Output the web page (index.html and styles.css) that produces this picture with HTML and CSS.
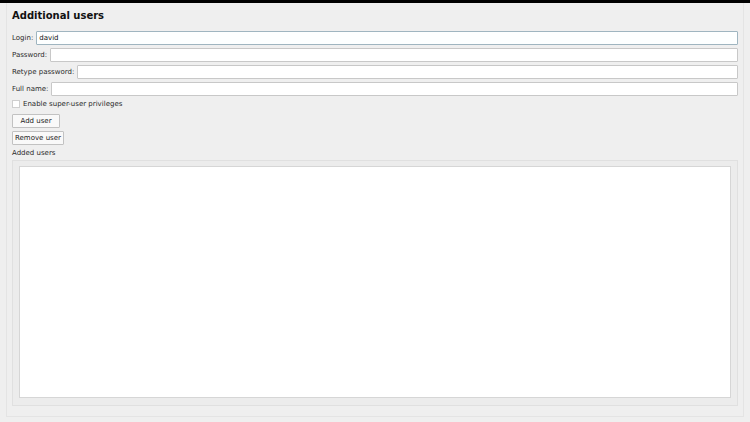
FILE: index.html
```html
<!DOCTYPE html>
<html>
<head>
<meta charset="utf-8">
<link rel="stylesheet" href="styles.css">
</head>
<body>
<div class="topbar"></div>
<div class="page">
  <h1 class="title">Additional users</h1>
  <div class="form">
    <div class="row"><label class="lbl">Login:</label><div class="input focus">david</div></div>
    <div class="row"><label class="lbl">Password:</label><div class="input"></div></div>
    <div class="row"><label class="lbl">Retype password:</label><div class="input"></div></div>
    <div class="row"><label class="lbl">Full name:</label><div class="input"></div></div>
  </div>
  <div class="check"><span class="box"></span><span class="lbl">Enable super-user privileges</span></div>
  <div class="buttons">
    <span class="btn add">Add user</span>
    <span class="btn">Remove user</span>
  </div>
  <div class="lbl added">Added users</div>
  <div class="frame"><div class="list"></div></div>
</div>
</body>
</html>
```
FILE: styles.css
```css
html, body {
  margin: 0;
  padding: 0;
  background: #efefef;
  font-family: "DejaVu Sans", sans-serif;
  color: #222;
  overflow: hidden;
}
.topbar {
  height: 3px;
  background: #000;
}
.page {
  margin: 0 6px;
  height: 414px;
  box-sizing: border-box;
  border: 1px solid #e4e4e4;
  border-top: none;
  padding: 0 5px 0 5px;
  display: flex;
  flex-direction: column;
}
.title {
  margin: 6px 0 0 0;
  font-size: 10px;
  line-height: 13px;
  font-weight: bold;
  color: #111;
  height: 13px;
}
.form {
  margin-top: 9px;
  display: flex;
  flex-direction: column;
  gap: 3px;
}
.row {
  display: flex;
  align-items: center;
  gap: 3px;
  height: 14px;
}
.lbl {
  font-size: 7px;
  line-height: 9px;
  color: #2a2a2a;
  white-space: nowrap;
}
.input {
  flex: 1;
  height: 14px;
  box-sizing: border-box;
  background: #fff;
  border: 1px solid #c8c8c8;
  border-radius: 1px;
  font-size: 7px;
  line-height: 12px;
  padding-left: 2px;
  color: #111;
}
.input.focus {
  border-color: #9fb5c0;
  background: #fdffff;
}
.check {
  margin-top: 3px;
  display: flex;
  align-items: center;
  gap: 3px;
  height: 10px;
}
.box {
  width: 8px;
  height: 8px;
  box-sizing: border-box;
  background: #fff;
  border: 1px solid #cfcfcf;
}
.buttons {
  margin-top: 5px;
  display: flex;
  flex-direction: column;
  align-items: flex-start;
  gap: 3px;
}
.btn {
  display: block;
  box-sizing: border-box;
  height: 14px;
  padding: 0 2px;
  font-size: 7px;
  line-height: 12px;
  background: #f9f9f9;
  border: 1px solid #c2c2c2;
  border-radius: 1px;
  color: #222;
}
.btn.add {
  width: 48px;
  text-align: center;
}
.added {
  margin-top: 4px;
}
.frame {
  margin-top: 2px;
  height: 246px;
  box-sizing: border-box;
  border: 1px solid #e0e0e0;
  background: #ececec;
  padding: 5px 6px 7px 6px;
}
.list {
  height: 100%;
  box-sizing: border-box;
  background: #fff;
  border: 1px solid #d6d6d6;
}
```
